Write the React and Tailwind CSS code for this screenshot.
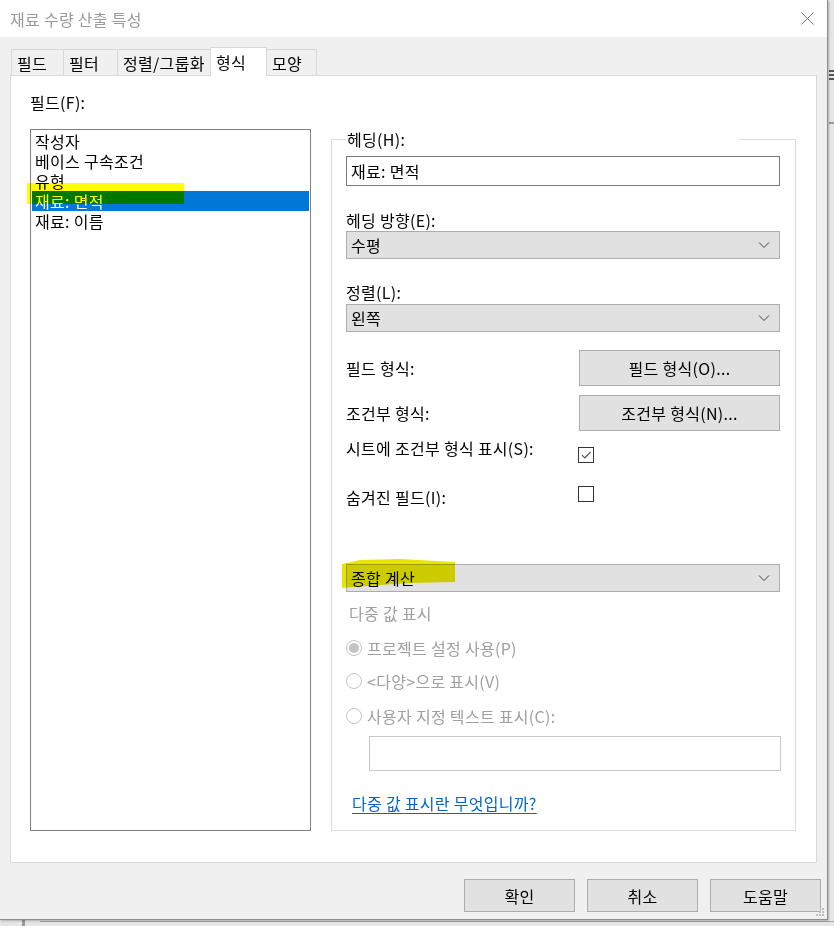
import React from "react";

const FONT = { fontFamily: '"Noto Sans CJK KR", "Noto Sans", sans-serif', letterSpacing: "0.3px" };

function Chevron() {
  return (
    <svg width="12" height="8" viewBox="0 0 12 8" className="shrink-0">
      <path d="M1 1.5 L6 6.5 L11 1.5" fill="none" stroke="#404040" strokeWidth="1" />
    </svg>
  );
}

function Select({ value }) {
  return (
    <div className="h-[28px] w-[434px] bg-[#e1e1e1] border border-[#adadad] flex items-center justify-between pl-[4px] pr-[9px] text-[16px] text-black">
      <span>{value}</span>
      <Chevron />
    </div>
  );
}

function Radio({ checked, label }) {
  return (
    <div className="flex items-center h-[20px]">
      <div className="w-[16px] h-[16px] rounded-full border border-[#c4c4c4] bg-white flex items-center justify-center">
        {checked && <div className="w-[10px] h-[10px] rounded-full bg-[#c4c4c4]" />}
      </div>
      <span className="ml-[5px] text-[16px] text-[#a0a0a0]">{label}</span>
    </div>
  );
}

function Checkbox({ checked }) {
  return (
    <div className="w-[16px] h-[16px] border border-[#333333] bg-white flex items-center justify-center">
      {checked && (
        <svg width="12" height="12" viewBox="0 0 12 12">
          <path d="M2 6.2 L4.8 9 L10.5 3" fill="none" stroke="#555555" strokeWidth="1.2" />
        </svg>
      )}
    </div>
  );
}

const tabs = [
  { label: "필드", w: "w-[53px]" },
  { label: "필터", w: "w-[55px]" },
  { label: "정렬/그룹화", w: "w-[94px]" },
  { label: "형식", w: "w-[57px]", active: true },
  { label: "모양", w: "w-[51px]" },
];

export default function App() {
  return (
    <div className="relative w-[834px] h-[926px] bg-[#e6e6e6] overflow-hidden text-black" style={FONT}>
      {/* background app behind dialog */}
      <div className="absolute left-[829px] top-[70px] w-[5px] h-[2px] bg-[#555]" />
      <div className="absolute left-[829px] top-[74px] w-[5px] h-[2px] bg-[#555]" />
      <div className="absolute left-[829px] top-[78px] w-[5px] h-[2px] bg-[#555]" />
      <div className="absolute left-[829px] top-[122px] w-[5px] h-[2px] bg-[#999]" />
      <div className="absolute left-[22px] top-[920px] w-[3px] h-[6px] bg-[#9a9a9a]" />
      <div className="absolute left-[40px] top-[921px] w-[794px] h-[2px] border-t border-[#a8a8a8]" />

      {/* dialog */}
      <div className="relative w-[828px] h-[920px] bg-[#f0f0f0] border-r border-b border-[#8c8c8c] flex flex-col shadow-[1px_1px_2px_rgba(0,0,0,0.25)]">
        {/* title bar */}
        <div className="h-[37px] bg-white flex items-center justify-between pl-[10px] pr-[13px] shrink-0">
          <span className="text-[16px] text-[#9a9a9a]">재료 수량 산출 특성</span>
          <svg width="13" height="13" viewBox="0 0 13 13">
            <path d="M0.5 0.5 L12.5 12.5 M12.5 0.5 L0.5 12.5" stroke="#7a7a7a" strokeWidth="1" />
          </svg>
        </div>

        {/* tabs */}
        <div className="flex items-end pl-[12px] mt-[10px] h-[28px] relative z-10">
          {tabs.map((t, i) =>
            t.active ? (
              <div
                key={i}
                className={`${t.w} h-[29px] -ml-[1px] bg-white border-l border-r border-t border-[#d9d9d9] flex items-start pt-[2px] pl-[5px] text-[16px] relative z-10 -mb-[1px]`}
              >
                {t.label}
              </div>
            ) : (
              <div
                key={i}
                className={`${t.w} h-[26px] -ml-[1px] bg-[#f0f0f0] border border-b-0 border-[#d9d9d9] flex items-center pl-[5px] text-[16px]`}
              >
                {t.label}
              </div>
            )
          )}
        </div>

        {/* panel */}
        <div className="mx-[10px] h-[788px] bg-white border border-[#d9d9d9] flex items-start">
          {/* left column */}
          <div className="ml-[19px] pt-[16px] w-[281px] flex flex-col">
            <div className="h-[20px] leading-[20px] text-[16px]">필드(F):</div>
            <div className="mt-[17px] h-[702px] border border-[#828282] bg-white pt-[1px] px-[1px] flex flex-col text-[16px]">
              <div className="h-[20px] leading-[20px] pl-[3px]">작성자</div>
              <div className="h-[20px] leading-[20px] pl-[3px]">베이스 구속조건</div>
              <div className="h-[20px] leading-[20px] pl-[3px]">유형</div>
              <div className="h-[20px] leading-[20px] pl-[3px] bg-[#0078d7] text-white">재료: 면적</div>
              <div className="h-[20px] leading-[20px] pl-[3px]">재료: 이름</div>
            </div>
          </div>

          {/* right group box */}
          <fieldset className="ml-[20px] mt-[53px] w-[465px] h-[702px] border border-[#dcdcdc] px-[14px] flex flex-col">
            <legend className="ml-[0px] w-[393px] h-[20px] leading-[20px] text-[16px] pl-[1px]">헤딩(H):</legend>
            <div className="mt-[7px] h-[30px] w-[434px] border border-[#7a7a7a] bg-white flex items-center pl-[4px] text-[16px]">
              재료: 면적
            </div>
            <div className="mt-[24px] h-[20px] leading-[20px] text-[16px]">헤딩 방향(E):</div>
            <div className="mt-[1px]">
              <Select value="수평" />
            </div>
            <div className="mt-[23px] h-[20px] leading-[20px] text-[16px]">정렬(L):</div>
            <div className="mt-[2px]">
              <Select value="왼쪽" />
            </div>

            <div className="mt-[18px] flex items-center h-[36px]">
              <div className="w-[233px] text-[16px]">필드 형식:</div>
              <div className="w-[201px] h-[36px] bg-[#e1e1e1] border border-[#adadad] flex items-center justify-center text-[16px]">
                필드 형식(O)...
              </div>
            </div>
            <div className="mt-[9px] flex items-center h-[36px]">
              <div className="w-[233px] text-[16px]">조건부 형식:</div>
              <div className="w-[201px] h-[36px] bg-[#e1e1e1] border border-[#adadad] flex items-center justify-center text-[16px]">
                조건부 형식(N)...
              </div>
            </div>
            <div className="mt-[7px] flex items-start h-[25px]">
              <div className="w-[232px] h-[20px] leading-[20px] text-[16px]">시트에 조건부 형식 표시(S):</div>
              <div className="mt-[9px]">
                <Checkbox checked />
              </div>
            </div>
            <div className="mt-[23px] flex items-start h-[21px]">
              <div className="w-[232px] mt-[1px] h-[20px] leading-[20px] text-[16px]">숨겨진 필드(I):</div>
              <Checkbox />
            </div>

            <div className="mt-[57px]">
              <Select value="종합 계산" />
            </div>
            <div className="mt-[11px] h-[20px] leading-[20px] pl-[3px] text-[16px] text-[#a0a0a0]">다중 값 표시</div>
            <div className="mt-[15px]">
              <Radio checked label="프로젝트 설정 사용(P)" />
            </div>
            <div className="mt-[13px]">
              <Radio label="<다양>으로 표시(V)" />
            </div>
            <div className="mt-[15px]">
              <Radio label="사용자 지정 텍스트 표시(C):" />
            </div>
            <div className="mt-[10px] ml-[23px] w-[412px] h-[35px] border border-[#c8c8c8] bg-white" />
            <div className="mt-[22px] ml-[6px] h-[20px] leading-[20px] text-[16px]">
              <span className="text-[#0066cc] underline underline-offset-[3px]">다중 값 표시란 무엇입니까?</span>
            </div>
          </fieldset>
        </div>

        {/* bottom buttons */}
        <div className="flex justify-end gap-[12px] pr-[6px] mt-[16px]">
          <div className="w-[111px] h-[33px] bg-[#e1e1e1] border border-[#adadad] flex items-center justify-center text-[16px]">확인</div>
          <div className="w-[111px] h-[33px] bg-[#e1e1e1] border border-[#adadad] flex items-center justify-center text-[16px]">취소</div>
          <div className="w-[111px] h-[33px] bg-[#e1e1e1] border border-[#adadad] flex items-center justify-center text-[16px]">도움말</div>
        </div>

        {/* resize grip */}
        <svg className="absolute right-[2px] bottom-[2px]" width="10" height="10" viewBox="0 0 10 10">
          <rect x="7" y="1" width="2" height="2" fill="#bdbdbd" />
          <rect x="4" y="4" width="2" height="2" fill="#bdbdbd" />
          <rect x="7" y="4" width="2" height="2" fill="#bdbdbd" />
          <rect x="1" y="7" width="2" height="2" fill="#bdbdbd" />
          <rect x="4" y="7" width="2" height="2" fill="#bdbdbd" />
          <rect x="7" y="7" width="2" height="2" fill="#bdbdbd" />
        </svg>
      </div>

      {/* highlighter marks */}
      <div className="absolute left-[27px] top-[183px] w-[157px] h-[21px] bg-[#ffff00] mix-blend-multiply" />
      <svg className="absolute left-0 top-0 mix-blend-multiply pointer-events-none" width="834" height="926">
        <polygon points="342,564 360,560 400,559 455,562 455,582 410,583 380,585 342,588" fill="#e6e600" />
      </svg>
    </div>
  );
}
